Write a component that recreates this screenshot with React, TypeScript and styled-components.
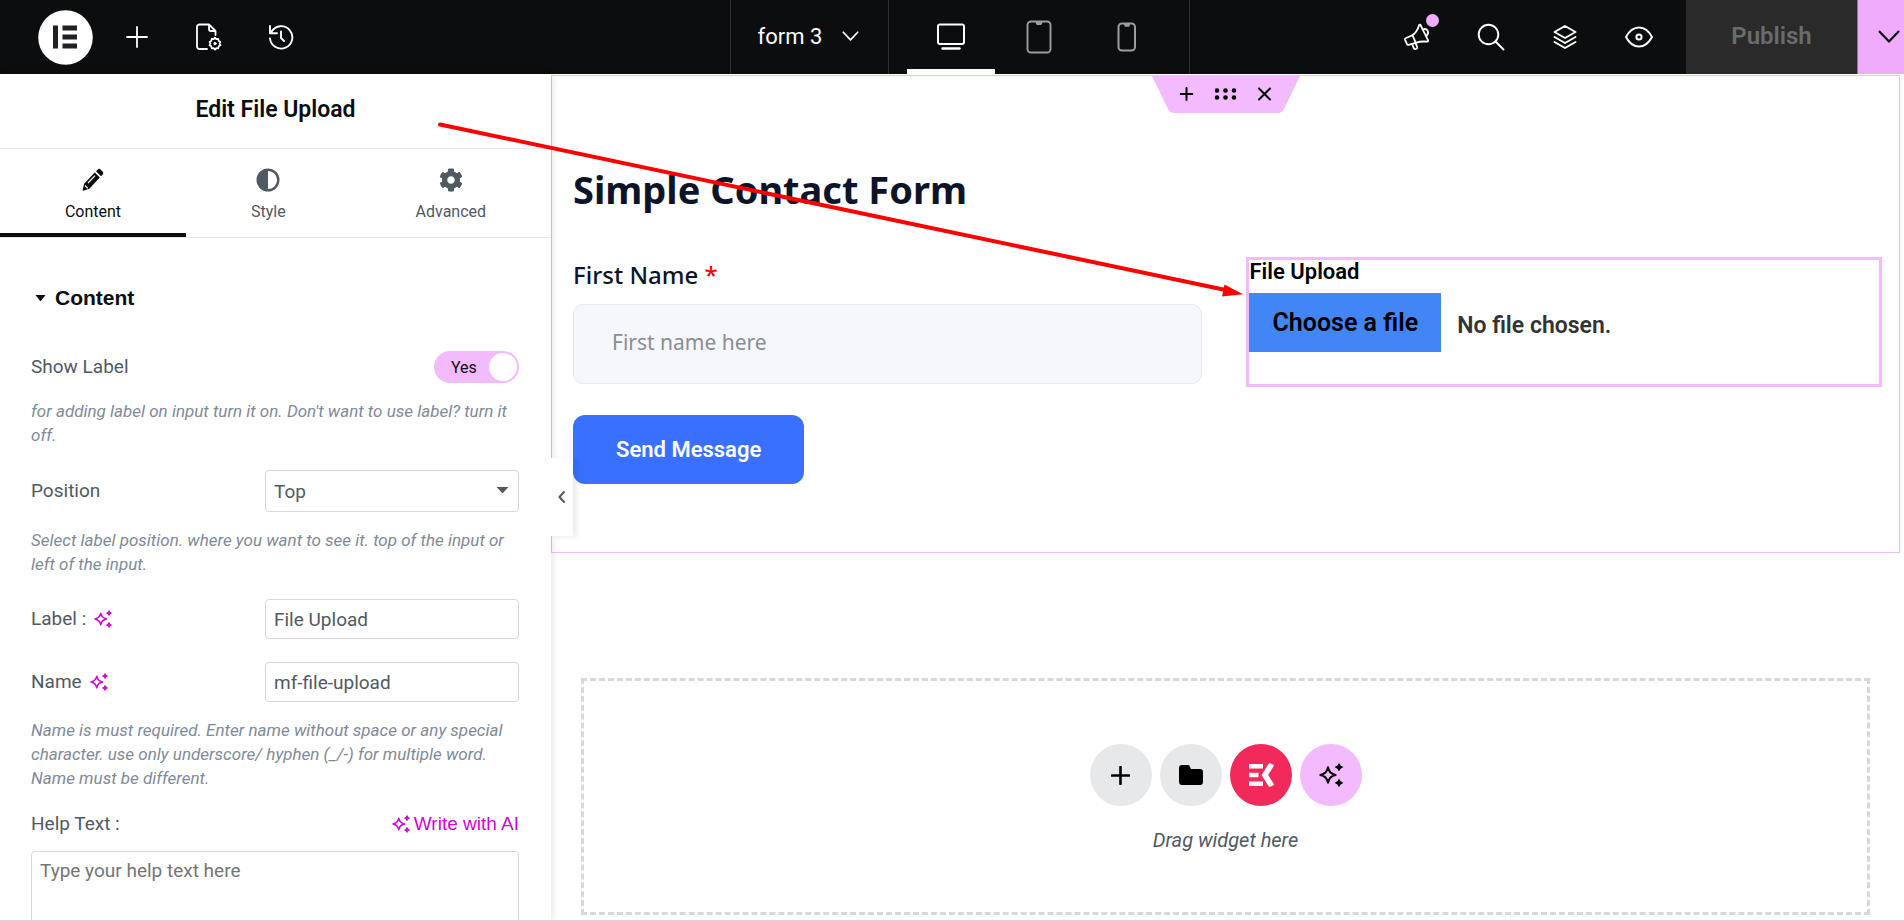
import React from "react";
import styled, { createGlobalStyle, css } from "styled-components";

const INK = "#0c0d0e";
const GREY = "#515962";
const PINK = "#f3bafd";
const MAGENTA = "#d004d4";
const LINE = "#d5d8dc";

const GlobalStyle = createGlobalStyle`
  *, *::before, *::after { box-sizing: border-box; }
  body { margin: 0; background: #fff; font-family: Roboto, "Liberation Sans", sans-serif; color: ${INK}; }
  button, input, select, textarea { font: inherit; color: inherit; margin: 0; }
  button { background: none; border: 0; padding: 0; cursor: pointer; }
  h1, h2, h3, p { margin: 0; }
  svg { display: block; flex: none; }
`;

const Editor = styled.div`
  position: relative;
  display: flex;
  flex-direction: column;
  height: 100vh;
  overflow: hidden;
  border-bottom: 1px solid #cfd6dc;
`;

/* Top bar */

const TopBar = styled.header`
  display: grid;
  grid-template-columns: 730fr auto 714fr;
  flex: none;
  height: 74px;
  background: ${INK};
  color: #fff;
`;

const BarStart = styled.div`
  display: flex;
  align-items: center;
  padding-left: 38px;
`;

const BarCenter = styled.div`
  display: flex;
  border: solid #2d2e30;
  border-width: 0 1px;
`;

const BarEnd = styled.div`
  display: flex;
  justify-content: flex-end;
`;

const LogoButton = styled.button`
  margin-right: 8px;
`;

const BarButton = styled.button<{ $width: number }>`
  position: relative;
  display: flex;
  align-items: center;
  justify-content: center;
  width: ${(p) => p.$width}px;
  height: 74px;
`;

const NewsDot = styled.span`
  position: absolute;
  top: 14px;
  right: 15px;
  width: 13px;
  height: 13px;
  border-radius: 50%;
  background: #f0abfc;
`;

const DocumentButton = styled.button`
  display: flex;
  align-items: center;
  gap: 20px;
  padding: 0 29px 2px 27px;
  font-size: 22px;
  border-right: 1px solid #2d2e30;
`;

const Devices = styled.div`
  display: flex;
  padding: 0 18px;
`;

const DeviceButton = styled.button<{ $active?: boolean }>`
  display: flex;
  align-items: center;
  justify-content: center;
  width: 88px;
  padding-top: 5px;
  border-bottom: 5px solid ${(p) => (p.$active ? "#fff" : "transparent")};
  color: ${(p) => (p.$active ? "#fff" : "#9c9d9e")};
`;

const PublishButton = styled.button`
  width: 171px;
  margin-left: 10px;
  padding-bottom: 2px;
  background: #2a2a2a;
  color: #6b6b6b;
  font-size: 24px;
  font-weight: 600;
`;

const PublishMenu = styled.button`
  width: 47px;
  padding-left: 20px;
  border-left: 1px solid #8d7392;
  background: #f0abfc;
  color: ${INK};
`;

/* Side panel */

const Workspace = styled.div`
  display: flex;
  flex: 1;
  min-height: 0;
`;

const Panel = styled.aside`
  position: relative;
  z-index: 1;
  display: flex;
  flex-direction: column;
  flex: 0 0 551px;
  background: #fff;
  box-shadow: 1px 0 8px rgba(0, 0, 0, 0.12);
`;

const PanelTitle = styled.h2`
  flex: none;
  height: 75px;
  padding-top: 20px;
  border-bottom: 1px solid #e6e8ea;
  font-size: 23px;
  line-height: 32px;
  font-weight: 600;
  text-align: center;
`;

const Tabs = styled.nav`
  display: flex;
  flex: none;
  height: 89px;
  border-bottom: 1px solid #e6e8ea;
`;

const Tab = styled.button<{ $active?: boolean }>`
  display: flex;
  flex: 1 1 auto;
  flex-direction: column;
  align-items: center;
  gap: 10px;
  padding-top: 19px;
  font-size: 16px;
  line-height: 20px;
  color: ${(p) => (p.$active ? INK : GREY)};
  border-bottom: 4px solid ${(p) => (p.$active ? INK : "transparent")};
`;

const PanelBody = styled.div`
  display: flex;
  flex-direction: column;
  flex: 1;
  min-height: 0;
  padding: 48px 32px 0 31px;
  overflow: hidden;
`;

const SectionToggle = styled.button`
  display: flex;
  align-items: center;
  gap: 9px;
  flex: none;
  height: 24px;
  margin-bottom: 41px;
  padding-left: 4px;
  font-family: "Liberation Sans", sans-serif;
  font-size: 21px;
  font-weight: 700;
`;

const Control = styled.div`
  flex: none;
  margin-bottom: 23px;
  font-size: 19px;
  color: ${GREY};
`;

const ControlRow = styled.div`
  display: flex;
  align-items: center;
  justify-content: space-between;
`;

const ControlName = styled.div`
  display: flex;
  align-items: center;
  gap: 8px;
  line-height: 20px;
`;

const Hint = styled.p`
  margin-top: 16px;
  font-size: 17px;
  line-height: 24px;
  font-style: italic;
  color: #818a96;
`;

const fieldBox = css`
  border: 1px solid ${LINE};
  border-radius: 4px;
  background: #fff;
  outline: none;
`;

const TextField = styled.input`
  ${fieldBox}
  width: 254px;
  height: 40px;
  padding: 0 8px;
`;

const SelectWrap = styled.div`
  position: relative;
  width: 254px;
`;

const SelectField = styled.select`
  ${fieldBox}
  width: 100%;
  height: 42px;
  padding: 0 8px;
  appearance: none;
`;

const SelectCaret = styled.span`
  position: absolute;
  top: 16px;
  right: 10px;
  pointer-events: none;
`;

const TextArea = styled.textarea`
  ${fieldBox}
  display: block;
  width: 100%;
  height: 128px;
  margin-top: 16px;
  padding: 7px 8px;
  line-height: 24px;
  resize: none;

  &::placeholder { color: #757575; }
`;

const AiButton = styled.button`
  display: flex;
  align-items: center;
  gap: 4px;
  font-family: "Liberation Sans", sans-serif;
  color: ${MAGENTA};
`;

const Switch = styled.label`
  position: relative;
  display: flex;
  align-items: center;
  width: 85px;
  height: 32px;
  padding-left: 17px;
  border-radius: 16px;
  background: ${PINK};
  color: ${INK};
  font-size: 16px;
  cursor: pointer;

  &::after {
    content: "";
    position: absolute;
    top: 2px;
    right: 2px;
    width: 28px;
    height: 28px;
    border-radius: 50%;
    background: #fff;
  }
`;

const HiddenInput = styled.input`
  position: absolute;
  width: 1px;
  height: 1px;
  opacity: 0;
`;

const CollapseButton = styled.button`
  position: absolute;
  top: 50%;
  left: 100%;
  display: flex;
  align-items: center;
  justify-content: center;
  width: 22px;
  height: 78px;
  transform: translateY(-50%);
  background: #fff;
  color: ${GREY};
  box-shadow: 4px 1px 5px rgba(0, 0, 0, 0.08);
`;

/* Canvas */

const Canvas = styled.main`
  flex: 1;
  min-width: 0;
  padding: 1px 4px 0 0;
`;

const FormSection = styled.section`
  position: relative;
  padding: 89px 17px 68px 21px;
  border: 1px solid ${PINK};
  color: #0d1429;
`;

const SectionHandle = styled.div`
  position: absolute;
  top: -1px;
  left: 50%;
  width: 149px;
  height: 38px;
  transform: translateX(-50%);
`;

const HandleShape = styled.svg`
  position: absolute;
  inset: 0;
`;

const HandleButtons = styled.div`
  position: relative;
  display: flex;
  justify-content: center;
  height: 38px;
  color: #000;
`;

const HandleButton = styled.button`
  display: flex;
  align-items: center;
  justify-content: center;
  width: 39px;
`;

const FormTitle = styled.h1`
  margin-bottom: 44px;
  font-family: "Noto Sans", sans-serif;
  font-size: 38px;
  line-height: 48px;
  font-weight: 700;
`;

const Columns = styled.div`
  display: grid;
  grid-template-columns: 629fr 635fr;
  gap: 44px;
  margin-bottom: 28px;
`;

const NameField = styled.div`
  padding-top: 4px;
  font-family: "Noto Sans", sans-serif;
`;

const NameLabel = styled.label`
  display: block;
  margin-bottom: 15px;
  font-size: 24px;
  line-height: 28px;
  font-weight: 500;
`;

const Required = styled.span`
  color: #f00;
`;

const NameInput = styled.input`
  display: block;
  width: 100%;
  height: 80px;
  padding: 0 38px 4px;
  border: 1px solid #e8eaf1;
  border-radius: 10px;
  background: #f5f7fb;
  font-size: 21px;

  &::placeholder { color: #8b8d94; }
`;

const UploadWidget = styled.div`
  height: 130px;
  border: 3px solid ${PINK};
  color: #000;
  font-weight: 600;
`;

const UploadTitle = styled.div`
  margin-bottom: 9px;
  font-size: 22px;
  line-height: 24px;
`;

const UploadRow = styled.div`
  position: relative;
  display: flex;
  align-items: center;
  gap: 16px;
`;

const ChooseFile = styled.label`
  padding: 0 23px;
  background: #4285f4;
  font-size: 25px;
  line-height: 59px;
  cursor: pointer;
`;

const FileStatus = styled.span`
  padding-top: 6px;
  font-size: 23px;
  color: #333;
`;

const SendButton = styled.button`
  display: block;
  height: 69px;
  padding: 0 43px;
  border-radius: 12px;
  background: #3970ff;
  color: #fff;
  font-size: 22px;
  font-weight: 600;
`;

const DropZone = styled.section`
  display: flex;
  flex-direction: column;
  align-items: center;
  margin: 125px 30px 0;
  padding: 63px 0 60px;
  border: 3px dashed ${LINE};
`;

const RoundButtons = styled.div`
  display: flex;
  gap: 8px;
`;

const RoundButton = styled.button<{ $bg: string }>`
  display: flex;
  align-items: center;
  justify-content: center;
  width: 62px;
  height: 62px;
  border-radius: 50%;
  background: ${(p) => p.$bg};
  color: #000;
`;

const DropHint = styled.p`
  margin-top: 22px;
  font-size: 20px;
  line-height: 24px;
  font-style: italic;
  color: ${GREY};
`;

const ArrowOverlay = styled.svg`
  position: absolute;
  top: 0;
  left: 0;
  z-index: 2;
  pointer-events: none;
`;

/* Icons */

const line = { fill: "none", stroke: "currentColor", strokeLinecap: "round", strokeLinejoin: "round" } as const;

const LogoIcon = () => (
  <svg width="55" height="55" viewBox="0 0 55 55">
    <circle cx="27.5" cy="27.5" r="27.3" fill="#fff" />
    <path d="M15 15.5h5v23h-5zM24.5 15.5H39v5H24.5zM24.5 24.5H39v5H24.5zM24.5 33.5H39v5H24.5z" fill="#1f2124" />
  </svg>
);

const PlusIcon = ({ size, weight }: { size: number; weight: number }) => (
  <svg width={size} height={size} viewBox={`0 0 ${size} ${size}`} {...line} strokeWidth={weight}>
    <path d={`M${size / 2} 1v${size - 2}M1 ${size / 2}h${size - 2}`} />
  </svg>
);

const PageSettingsIcon = () => (
  <svg width="26" height="28" viewBox="0 0 26 28" {...line} strokeWidth="1.8">
    <path d="M11 26H3.5A2.5 2.5 0 0 1 1 23.500V4a2.5 2.5 0 0 1 2.5-2.5H13l6.5 6.500v4M13 1.5V6a2 2 0 0 0 2 2h4.500" />
    <path d="M19 14.600l1.300 1.500 2-.200.400 2 1.800 1-.900 1.700.900 1.700-1.800 1-.400 2-2-.200L19 26.600l-1.300-1.500-2 .200-.400-2-1.800-1 .900-1.700-.900-1.700 1.800-1 .400-2 2 .200z" strokeWidth="1.700" />
    <circle cx="19" cy="20.600" r="1.200" fill="currentColor" strokeWidth="1" />
  </svg>
);

const HistoryIcon = () => (
  <svg width="26" height="26" viewBox="0 0 26 26" {...line} strokeWidth="1.9">
    <path d="M2 14.500A11.200 11.200 0 1 0 3.600 7.500M2 2v7.200h7M13 7.500V14l3 3" />
  </svg>
);

const ChevronDown = ({ width, weight }: { width: number; weight: number }) => (
  <svg width={width} height={width * 0.6} viewBox="0 0 20 12" {...line} strokeWidth={weight}>
    <path d="M1.500 1.500L10 10.500l8.500-9" />
  </svg>
);

const DesktopIcon = () => (
  <svg width="28" height="28" viewBox="0 0 28 28" {...line} strokeWidth="2">
    <rect x="1" y="1.500" width="26" height="19.500" rx="2" />
    <path d="M5.500 25.500h17" strokeWidth="2.400" />
  </svg>
);

const TabletIcon = () => (
  <svg width="26" height="34" viewBox="0 0 26 34" {...line} strokeWidth="1.9">
    <rect x="1.500" y="1.500" width="23" height="31" rx="3.500" />
    <path d="M10.500 2.500h5l-.600 1.500h-3.800z" fill="currentColor" />
  </svg>
);

const PhoneIcon = () => (
  <svg width="20" height="30" viewBox="0 0 20 30" {...line} strokeWidth="2">
    <rect x="1.500" y="1.500" width="16.500" height="27" rx="3.500" />
    <path d="M8 2.500h4l-.500 1.300h-3z" fill="currentColor" />
  </svg>
);

const MegaphoneIcon = () => (
  <svg width="28" height="28" viewBox="0 0 28 28" {...line} strokeWidth="1.800">
    <path d="M16.200 1.900q.900-.600 1.500.400L25 17.200q.400 1.300-.900 1.500-6.500-.700-11.300 1.200L9.400 12.200Q14 9 16.200 1.900z" />
    <path d="M9.400 12.200L2.600 15.200q-1 .500-.600 1.500l2 4.500q.500 1 1.500.600l7.300-1.900M19.600 6.500q3.400-1.500 5 1.200 1.400 3.200-1.200 5.300" />
    <path d="M9 20.900l1.900 4.400q.600 1.100 1.700.700l1-.400q1-.500.600-1.600l-1.800-4.100" />
  </svg>
);

const SearchIcon = () => (
  <svg width="28" height="28" viewBox="0 0 28 28" {...line} strokeWidth="1.900">
    <circle cx="11.500" cy="11.500" r="9.800" />
    <path d="M18.500 18.500L26.500 26.500" />
  </svg>
);

const LayersIcon = () => (
  <svg width="26" height="26" viewBox="0 0 26 26" {...line} strokeWidth="1.900">
    <path d="M13 2l10.500 6L13 14 2.500 8zM2.500 13L13 19l10.500-6M2.500 18L13 24l10.500-6" />
  </svg>
);

const EyeIcon = () => (
  <svg width="30" height="24" viewBox="0 0 30 24" {...line} strokeWidth="2">
    <path d="M2 12Q7 2.500 15 2.500T28 12Q23 21.500 15 21.500T2 12z" />
    <circle cx="15" cy="12" r="2.600" />
  </svg>
);

const PencilIcon = () => (
  <svg width="22" height="24" viewBox="0 0 22 24">
    <path d="M14 3.200l1.800-1.800q1.300-1.100 2.700 0l2.300 2.400q1.100 1.300 0 2.700L19 8.300zM12.800 4.400l5 5.100L7.300 20.800 1.200 22.800q-.700.100-.600-.600l1.500-6.400z" fill="currentColor" />
    <path d="M6 15L13 7.700M3 17.500l2.800 2.900" stroke="#fff" strokeWidth="1.200" fill="none" />
  </svg>
);

const ContrastIcon = () => (
  <svg width="24" height="24" viewBox="0 0 24 24">
    <circle cx="12" cy="12" r="10.300" fill="none" stroke="currentColor" strokeWidth="2.400" />
    <path d="M12 1.500a10.500 10.500 0 0 0 0 21z" fill="currentColor" />
  </svg>
);

const GearIcon = () => (
  <svg width="24" height="24" viewBox="0 0 512 512">
    <path
      fill="currentColor"
      d="M487.4 315.700l-42.600-24.600c4.300-23.200 4.300-47 0-70.200l42.600-24.600c4.900-2.800 7.100-8.600 5.500-14-11.100-35.600-30-67.800-54.700-94.600-3.800-4.100-10-5.100-14.800-2.300L380.800 110c-17.900-15.400-38.500-27.300-60.800-35.100V25.800c0-5.600-3.900-10.500-9.400-11.700-36.700-8.200-74.300-7.800-109.200 0-5.500 1.200-9.400 6.100-9.400 11.700V75c-22.200 7.900-42.800 19.800-60.800 35.100L88.700 85.500c-4.900-2.800-11-1.900-14.800 2.300-24.700 26.700-43.600 58.900-54.700 94.600-1.700 5.400.6 11.200 5.500 14L67.300 221c-4.300 23.200-4.300 47 0 70.200l-42.600 24.600c-4.900 2.800-7.100 8.600-5.500 14 11.100 35.600 30 67.800 54.700 94.600 3.800 4.100 10 5.100 14.800 2.300l42.600-24.600c17.900 15.400 38.500 27.300 60.800 35.100v49.200c0 5.600 3.900 10.500 9.400 11.700 36.700 8.200 74.300 7.800 109.200 0 5.500-1.200 9.400-6.100 9.400-11.700v-49.200c22.200-7.900 42.800-19.800 60.800-35.100l42.600 24.600c4.900 2.800 11 1.900 14.800-2.300 24.700-26.700 43.600-58.900 54.700-94.600 1.500-5.500-.700-11.300-5.600-14.100zM256 336c-44.100 0-80-35.900-80-80s35.900-80 80-80 80 35.900 80 80-35.900 80-80 80z"
    />
  </svg>
);

const Caret = ({ width }: { width: number }) => (
  <svg width={width} height="8" viewBox="0 0 12 8" preserveAspectRatio="none">
    <path d="M.500 1h11L6.600 6.700q-.600.600-1.200 0z" fill="currentColor" />
  </svg>
);

const SparkleIcon = ({ size }: { size: number }) => (
  <svg width={size} height={size} viewBox="0 0 24 24">
    <path
      d="M9 4.300Q10.200 10.800 16.700 12 10.200 13.200 9 19.700 7.800 13.200 1.300 12 7.800 10.800 9 4.300z"
      fill="none"
      stroke="currentColor"
      strokeWidth="2"
      strokeLinejoin="round"
    />
    <path d="M20 .800q.500 2.700 3.300 3.300-2.800.600-3.300 3.300-.500-2.700-3.300-3.300 2.800-.600 3.300-3.300zM20 16.600q.500 2.700 3.300 3.300-2.800.600-3.300 3.300-.500-2.700-3.300-3.300 2.800-.600 3.300-3.300z" fill="currentColor" stroke="currentColor" strokeWidth="1.300" strokeLinejoin="round" />
  </svg>
);

const ChevronLeft = () => (
  <svg width="9" height="12" viewBox="0 0 9 12" {...line} strokeWidth="2">
    <path d="M6 1L1.500 6 6 11" />
  </svg>
);

const DotsIcon = () => (
  <svg width="22" height="12" viewBox="0 0 22 12" fill="currentColor">
    {[2.5, 11, 19.5].map((x) => (
      <React.Fragment key={x}>
        <circle cx={x} cy="2.500" r="2.300" />
        <circle cx={x} cy="9.500" r="2.300" />
      </React.Fragment>
    ))}
  </svg>
);

const CloseIcon = () => (
  <svg width="14" height="14" viewBox="0 0 14 14" {...line} strokeWidth="2">
    <path d="M1.500 1.500l11 11M12.500 1.500l-11 11" />
  </svg>
);

const FolderIcon = () => (
  <svg width="24" height="20" viewBox="0 0 24 20">
    <path d="M3 0h6q1 0 1.500.800L12 4h9q3 0 3 3v10q0 3-3 3H3q-3 0-3-3V3Q0 0 3 0z" fill="currentColor" />
  </svg>
);

const ElementsKitIcon = () => (
  <svg width="26" height="24" viewBox="0 0 26 24" fill="#fff">
    <path d="M1 1h14v4.500H1zM1 9.700h9.500v4.600H1zM1 18.500h14V23H1z" />
    <path d="M20.800.600q.600-.700 1.500-.300l3 1.500q.900.500.400 1.400L20.200 12l5.500 8.800q.500.900-.400 1.400l-3 1.500q-.900.400-1.500-.300L13.500 12z" />
  </svg>
);

export default function App() {
  return (
    <Editor>
      <GlobalStyle />
      <TopBar>
        <BarStart>
          <LogoButton aria-label="Elementor menu"><LogoIcon /></LogoButton>
          <BarButton $width={72} aria-label="Add element"><PlusIcon size={22} weight={1.8} /></BarButton>
          <BarButton $width={72} aria-label="Page settings"><PageSettingsIcon /></BarButton>
          <BarButton $width={72} aria-label="History"><HistoryIcon /></BarButton>
        </BarStart>
        <BarCenter>
          <DocumentButton>
            form 3
            <ChevronDown width={17} weight={2} />
          </DocumentButton>
          <Devices>
            <DeviceButton $active aria-label="Desktop"><DesktopIcon /></DeviceButton>
            <DeviceButton aria-label="Tablet"><TabletIcon /></DeviceButton>
            <DeviceButton aria-label="Mobile"><PhoneIcon /></DeviceButton>
          </Devices>
        </BarCenter>
        <BarEnd>
          <BarButton $width={74} aria-label="What's new"><MegaphoneIcon /><NewsDot /></BarButton>
          <BarButton $width={74} aria-label="Finder"><SearchIcon /></BarButton>
          <BarButton $width={74} aria-label="Structure"><LayersIcon /></BarButton>
          <BarButton $width={74} aria-label="Preview"><EyeIcon /></BarButton>
          <PublishButton>Publish</PublishButton>
          <PublishMenu aria-label="Save options"><ChevronDown width={22} weight={2} /></PublishMenu>
        </BarEnd>
      </TopBar>

      <Workspace>
        <Panel>
          <PanelTitle>Edit File Upload</PanelTitle>
          <Tabs>
            <Tab $active><PencilIcon />Content</Tab>
            <Tab><ContrastIcon />Style</Tab>
            <Tab><GearIcon />Advanced</Tab>
          </Tabs>
          <PanelBody>
            <SectionToggle><Caret width={11} />Content</SectionToggle>

            <Control>
              <ControlRow>
                <ControlName as="label" htmlFor="show-label">Show Label</ControlName>
                <Switch>
                  <HiddenInput type="checkbox" id="show-label" defaultChecked />
                  Yes
                </Switch>
              </ControlRow>
              <Hint>for adding label on input turn it on. Don't want to use label? turn it off.</Hint>
            </Control>

            <Control>
              <ControlRow>
                <ControlName as="label" htmlFor="position">Position</ControlName>
                <SelectWrap>
                  <SelectField id="position" defaultValue="Top">
                    <option>Top</option>
                    <option>Left</option>
                  </SelectField>
                  <SelectCaret><Caret width={13} /></SelectCaret>
                </SelectWrap>
              </ControlRow>
              <Hint>Select label position. where you want to see it. top of the input or left of the input.</Hint>
            </Control>

            <Control>
              <ControlRow>
                <ControlName>
                  <label htmlFor="label">Label :</label>
                  <AiButton aria-label="Write label with AI"><SparkleIcon size={18} /></AiButton>
                </ControlName>
                <TextField id="label" defaultValue="File Upload" />
              </ControlRow>
            </Control>

            <Control>
              <ControlRow>
                <ControlName>
                  <label htmlFor="name">Name</label>
                  <AiButton aria-label="Write name with AI"><SparkleIcon size={18} /></AiButton>
                </ControlName>
                <TextField id="name" defaultValue="mf-file-upload" />
              </ControlRow>
              <Hint>Name is must required. Enter name without space or any special character. use only underscore/ hyphen (_/-) for multiple word. Name must be different.</Hint>
            </Control>

            <Control>
              <ControlRow>
                <ControlName as="label" htmlFor="help-text">Help Text :</ControlName>
                <AiButton><SparkleIcon size={18} />Write with AI</AiButton>
              </ControlRow>
              <TextArea id="help-text" placeholder="Type your help text here" />
            </Control>
          </PanelBody>
          <CollapseButton aria-label="Hide panel"><ChevronLeft /></CollapseButton>
        </Panel>

        <Canvas>
          <FormSection>
            <SectionHandle>
              <HandleShape width="149" height="38" viewBox="0 0 149 38">
                <path d="M0 0h149l-16 33q-2 5-7 5H23q-5 0-7-5z" fill={PINK} />
              </HandleShape>
              <HandleButtons>
                <HandleButton aria-label="Add section"><PlusIcon size={14} weight={2} /></HandleButton>
                <HandleButton aria-label="Edit section"><DotsIcon /></HandleButton>
                <HandleButton aria-label="Delete section"><CloseIcon /></HandleButton>
              </HandleButtons>
            </SectionHandle>

            <FormTitle>Simple Contact Form</FormTitle>
            <Columns>
              <NameField>
                <NameLabel htmlFor="first-name">First Name <Required>*</Required></NameLabel>
                <NameInput id="first-name" placeholder="First name here" />
              </NameField>
              <UploadWidget>
                <UploadTitle>File Upload</UploadTitle>
                <UploadRow>
                  <HiddenInput type="file" id="file" />
                  <ChooseFile htmlFor="file">Choose a file</ChooseFile>
                  <FileStatus>No file chosen.</FileStatus>
                </UploadRow>
              </UploadWidget>
            </Columns>
            <SendButton>Send Message</SendButton>
          </FormSection>

          <DropZone>
            <RoundButtons>
              <RoundButton $bg="#e6e8ea" aria-label="Add container"><PlusIcon size={19} weight={2.6} /></RoundButton>
              <RoundButton $bg="#e6e8ea" aria-label="Add template"><FolderIcon /></RoundButton>
              <RoundButton $bg="#f22a5c" aria-label="ElementsKit library"><ElementsKitIcon /></RoundButton>
              <RoundButton $bg={PINK} aria-label="Build with AI"><SparkleIcon size={24} /></RoundButton>
            </RoundButtons>
            <DropHint>Drag widget here</DropHint>
          </DropZone>
        </Canvas>
      </Workspace>

      <ArrowOverlay width="1260" height="310" viewBox="0 0 1260 310">
        <path d="M440 124.500L1228 290.500" stroke="#f00" strokeWidth="4" strokeLinecap="round" />
        <path d="M1243 294.300L1224.500 284.500 1222 296.500z" fill="#f00" />
      </ArrowOverlay>
    </Editor>
  );
}
